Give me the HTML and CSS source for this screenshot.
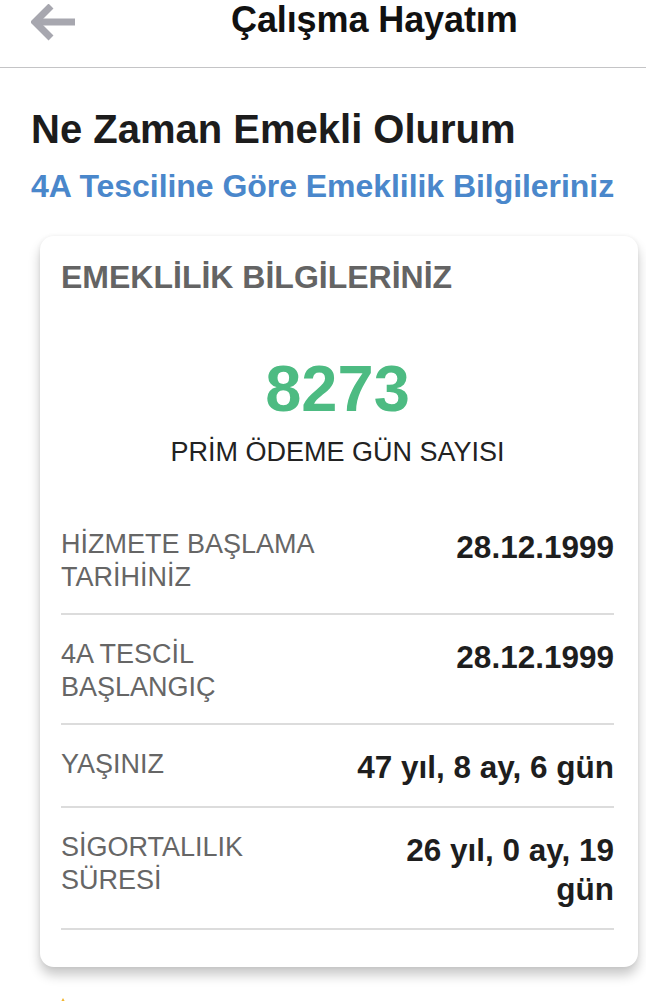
FILE: index.html
```html
<!DOCTYPE html>
<html lang="tr">
<head>
  <meta charset="UTF-8" />
  <meta name="viewport" content="width=device-width, initial-scale=1.0"/>
  <title>Çalışma Hayatım</title>
  <link rel="stylesheet" href="styles.css">
</head>
<body>
  <div class="header">
    <svg class="back" width="46" height="40" viewBox="0 0 46 40">
      <path d="M44 18H6" stroke="#a7a7af" stroke-width="7" fill="none"/>
      <path d="M20 2L4 18L20 34" stroke="#a7a7af" stroke-width="7" fill="none"/>
    </svg>
    <h1 class="title">Çalışma Hayatım</h1>
  </div>

  <div class="content">
    <h2 class="page-title">Ne Zaman Emekli Olurum</h2>
    <p class="subtitle">4A Tesciline Göre Emeklilik Bilgileriniz</p>

    <div class="card">
      <h3 class="card-title">EMEKLİLİK BİLGİLERİNİZ</h3>
      <div class="prim">8273</div>
      <div class="prim-label">PRİM ÖDEME GÜN SAYISI</div>

      <div class="rows">
        <div class="row">
          <div class="label">HİZMETE BAŞLAMA<br>TARİHİNİZ</div>
          <div class="value">28.12.1999</div>
        </div>
        <div class="row">
          <div class="label">4A TESCİL<br>BAŞLANGIÇ</div>
          <div class="value">28.12.1999</div>
        </div>
        <div class="row">
          <div class="label">YAŞINIZ</div>
          <div class="value">47 yıl, 8 ay, 6 gün</div>
        </div>
        <div class="row">
          <div class="label">SİGORTALILIK<br>SÜRESİ</div>
          <div class="value">26 yıl, 0 ay, 19<br>gün</div>
        </div>
      </div>
    </div>

    <div class="note">
      <svg width="26" height="24" viewBox="0 0 26 24">
        <path d="M13 1L25 23H1Z" fill="#f2b630"/>
      </svg>
    </div>
  </div>
</body>
</html>
```

FILE: styles.css
```css
body {
  font-family: 'Liberation Sans', Arial, sans-serif;
  background-color: #fff;
  margin: 0;
  padding: 0;
  overflow: hidden;
}

.header {
  display: flex;
  align-items: flex-start;
  height: 67px;
  border-bottom: 1px solid #c4c4c6;
}

.back {
  margin-left: 31px;
  margin-top: 4px;
}

.title {
  margin: 0 0 0 154px;
  font-size: 36px;
  line-height: 40px;
  font-weight: bold;
  color: #111;
  letter-spacing: -0.1px;
}

.content {
  padding: 0 8px 0 31px;
}

.page-title {
  margin: 38px 0 0;
  font-size: 40px;
  line-height: 46px;
  font-weight: bold;
  color: #1c1c1c;
}

.subtitle {
  margin: 15px 0 0;
  font-size: 32px;
  line-height: 38px;
  font-weight: bold;
  color: #4a87cb;
  letter-spacing: -0.05px;
}

.card {
  margin: 31px 0 0 9px;
  background: #fff;
  border-radius: 14px;
  box-shadow: 0 8px 12px rgba(0, 0, 0, 0.22), 0 0 4px rgba(0, 0, 0, 0.06);
  padding: 22px 24px 37px 21px;
}

.card-title {
  margin: 0;
  font-size: 32px;
  line-height: 38px;
  font-weight: bold;
  color: #646464;
}

.prim {
  margin-top: 56px;
  text-align: center;
  font-size: 65px;
  line-height: 74px;
  font-weight: bold;
  color: #4dbb82;
}

.prim-label {
  margin-top: 10px;
  text-align: center;
  font-size: 27px;
  line-height: 32px;
  color: #222;
}

.rows {
  margin-top: 37px;
}

.row {
  display: flex;
  justify-content: space-between;
  align-items: flex-start;
  padding: 23px 0 19px;
  border-bottom: 2px solid #dcdcdc;
}

.label {
  font-size: 27px;
  line-height: 33px;
  color: #666;
}

.value {
  font-size: 31.5px;
  line-height: 39px;
  font-weight: bold;
  color: #1e1e1e;
  text-align: right;
}

.note {
  margin: 30px 0 0 19px;
}
```
